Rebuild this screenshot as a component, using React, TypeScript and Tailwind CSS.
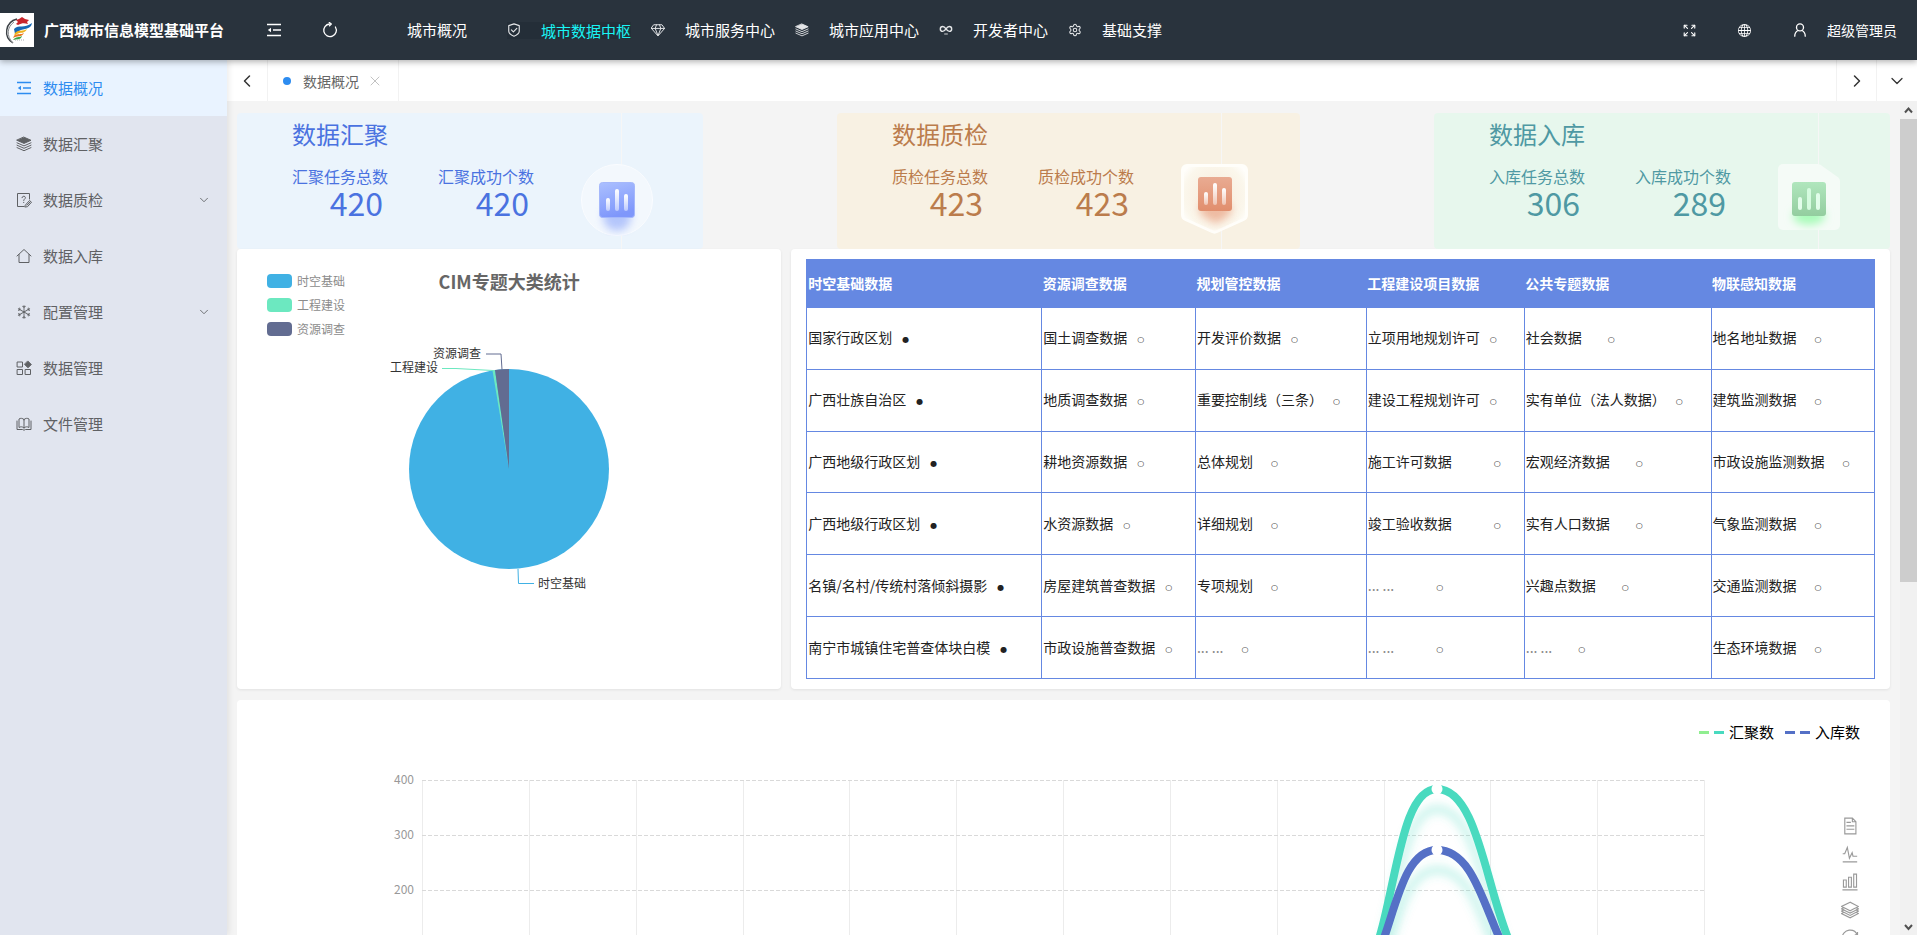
import React, { useState } from 'react';
import clsx from 'clsx';
import { BsGlobe, BsSnow } from 'react-icons/bs';
import { ChevronDown, ChevronLeft, ChevronRight, Settings, X } from 'lucide-react';

type IconProps = { className?: string };

const stroke = {
  viewBox: '0 0 16 16',
  fill: 'none',
  stroke: 'currentColor',
  strokeLinejoin: 'round' as const,
  strokeLinecap: 'round' as const,
};

const FoldIcon = ({ className }: IconProps) => (
  <svg viewBox="0 0 16 16" fill="none" stroke="currentColor" strokeWidth="1.5" className={className}>
    <path d="M1 2.5h14M7 8h8M1 13.5h14" />
    <path d="M5 5.8v4.4L1.8 8z" fill="currentColor" stroke="none" />
  </svg>
);

const ReloadIcon = ({ className }: IconProps) => (
  <svg {...stroke} strokeWidth="1.3" className={className}>
    <path d="M13.4 5A6.3 6.3 0 1 1 7.6 2" />
    <path d="M7.3.5l2 1.6-1.8 1.7" />
  </svg>
);

const ShieldIcon = ({ className }: IconProps) => (
  <svg {...stroke} strokeWidth="1.3" className={className}>
    <path d="M8 1l6 2v6.5c0 2.6-2.6 4.3-6 5.7-3.4-1.4-6-3.1-6-5.7V3z" />
    <path d="M5 7.8l2.3 2.3 3.9-4" />
  </svg>
);

const DiamondIcon = ({ className }: IconProps) => (
  <svg {...stroke} strokeWidth="1.1" className={className}>
    <path d="M3.5 2h9l3 4.2L8 14.8.5 6.2z" />
    <path d="M.5 6.2h15M4.8 6.2L8 14.5l3.2-8.3M4.8 6.2L6.3 2M11.2 6.2L9.7 2" />
  </svg>
);

const LayersIcon = ({ className }: IconProps) => (
  <svg {...stroke} strokeWidth="1" className={className}>
    <path d="M8 1.2l7 3.1-7 3.1-7-3.1z" fill="currentColor" />
    <path d="M1 6.8l7 3.1 7-3.1M1 9.2l7 3.1 7-3.1M1 11.6l7 3.1 7-3.1" />
  </svg>
);

const InfinityIcon = ({ className }: IconProps) => (
  <svg {...stroke} strokeWidth="1.6" className={className}>
    <path d="M8 6.8C6.8 5 5.800 4 4.300 4a2.800 2.800 0 0 0 0 5.600C5.800 9.600 6.800 8.600 8 6.800S10.200 4 11.700 4a2.800 2.800 0 0 1 0 5.600C10.200 9.600 9.200 8.600 8 6.800z" />
    <path d="M6.5 12.5h3" opacity="0.6" />
  </svg>
);

const ExpandIcon = ({ className }: IconProps) => (
  <svg {...stroke} strokeWidth="1.4" className={className}>
    <path d="M1.5 5V1.5H5M11 1.5h3.5V5M14.5 11v3.5H11M5 14.5H1.5V11" />
    <path d="M1.8 1.8l3.7 3.7M14.2 1.8l-3.7 3.7M14.2 14.2l-3.7-3.7M1.8 14.2l3.7-3.7" />
  </svg>
);

const UserIcon = ({ className }: IconProps) => (
  <svg {...stroke} strokeWidth="1.5" className={className}>
    <circle cx="8" cy="5" r="4" />
    <path d="M5.8 8.6C3.5 9.7 2 11.9 2 15M10.2 8.6c2.3 1.1 3.8 3.3 3.8 6.4" />
  </svg>
);

const SurveyIcon = ({ className }: IconProps) => (
  <svg {...stroke} strokeWidth="1" className={className}>
    <path d="M13.5 7V1.5h-12v13H8" />
    <path d="M6 5.7c0-2 3.4-2 3.4 0 0 1.3-1.7 1.3-1.7 2.8M7.7 10.3v.3" />
    <path d="M9.5 13l4-4.5 2 1.7-4 4.5-2.3.3zM11 13.2l3-3.2" />
  </svg>
);

const HouseIcon = ({ className }: IconProps) => (
  <svg {...stroke} strokeWidth="1" className={className}>
    <path d="M1 8l7-6.5L15 8M3 6.5v8h10v-8" />
  </svg>
);

const AppsIcon = ({ className }: IconProps) => (
  <svg {...stroke} strokeWidth="1" className={className}>
    <path d="M1.5 2h5v5h-5zM1.5 9.5h5v5h-5zM9.5 9.5h5v5h-5z" />
    <path d="M12 1.2l3.3 3.3L12 7.8 8.7 4.5z" fill="currentColor" />
  </svg>
);

const BookIcon = ({ className }: IconProps) => (
  <svg {...stroke} strokeWidth="1" className={className}>
    <path d="M8 3.5C6.500 2 4.500 2 3 3v8.500c1.500-1 3.500-1 5 .5 1.500-1.500 3.500-1.500 5-.5V3c-1.500-1-3.500-1-5 .5zM8 3.500V12" />
    <path d="M1 5v8.5h5.5L8 14.200l1.500-.7H15V5" />
  </svg>
);

const Logo = () => (
  <svg viewBox="0 0 34 34" className="size-[34px] shrink-0 bg-white" role="img" aria-label="logo">
    <path d="M17 6C5 9 3 24 13 30" fill="none" stroke="#3d4247" strokeWidth="1.4" />
    <path d="M14 9C7 14 6 23 13 30" fill="none" stroke="#85898d" strokeWidth="1" />
    <path d="M16 7l3-1 3-2 3 2 4 1-2 2 1 2c-4-1-6-1-10 1l-2-1 2-2z" fill="#c8252c" />
    <path d="M14 16c5-5 10 0 18-6-1 7-8 5-13 8-2 1-4 3-4 3z" fill="#1769b5" />
    <path d="M15 20c4-4 8-1 12-4-2 5-7 3-10 5l-3 2z" fill="#f0b21d" />
    <path d="M14 23c4-3 7-1 10-3-2 4-6 3-9 4l-2 1z" fill="#e8741e" />
    <path d="M13 27c3-4 6-2 9-4-1 4-5 3-9 4z" fill="#3ea447" />
    <path d="M15 27h10" stroke="#a9adb1" strokeWidth="1" strokeDasharray="1 1" />
  </svg>
);

const navLinks = [
  { label: '城市概况', icon: null },
  { label: '城市数据中枢', icon: <ShieldIcon className="size-4" /> },
  { label: '城市服务中心', icon: <DiamondIcon className="size-3.5" /> },
  { label: '城市应用中心', icon: <LayersIcon className="size-4" /> },
  { label: '开发者中心', icon: <InfinityIcon className="size-3.5" /> },
  { label: '基础支撑', icon: <Settings className="size-4" strokeWidth={1.8} /> },
];

const sideLinks = [
  { label: '数据概况', icon: <FoldIcon className="size-4" />, more: false },
  { label: '数据汇聚', icon: <LayersIcon className="size-4" />, more: false },
  { label: '数据质检', icon: <SurveyIcon className="size-4" />, more: true },
  { label: '数据入库', icon: <HouseIcon className="size-4" />, more: false },
  { label: '配置管理', icon: <BsSnow className="size-3.5" />, more: true },
  { label: '数据管理', icon: <AppsIcon className="size-4" />, more: false },
  { label: '文件管理', icon: <BookIcon className="size-4" />, more: false },
];

const Header = () => (
  <header className="relative z-20 flex h-[60px] shrink-0 items-center bg-[#29333d] text-[15px] text-white shadow-[0_2px_6px_rgba(0,0,0,0.3)]">
    <div className="flex w-[266px] shrink-0 items-center gap-2.5">
      <Logo />
      <h1 className="font-bold">广西城市信息模型基础平台</h1>
    </div>
    <button aria-label="收起菜单" className="flex w-4 justify-center">
      <FoldIcon className="size-4" />
    </button>
    <button aria-label="刷新" className="ml-10 flex w-4 justify-center">
      <ReloadIcon className="size-4" />
    </button>
    <nav className="ml-[69px] flex items-center gap-5">
      {navLinks.map((link, i) => (
        <a
          key={link.label}
          href="#"
          className={clsx(
            'flex items-center whitespace-nowrap',
            i === 0 && 'mr-5',
            i === 1 && 'bg-[#242e38] leading-[17px] text-[#19f5f5]'
          )}
        >
          {link.icon && (
            <span className="mr-5 flex w-3.5 justify-center text-[#e4e6e8]">{link.icon}</span>
          )}
          {link.label}
        </a>
      ))}
    </nav>
    <div className="ml-auto flex items-center pr-5 text-sm">
      <button aria-label="全屏" className="flex w-[55px] justify-center">
        <ExpandIcon className="size-[13px]" />
      </button>
      <button aria-label="语言" className="flex w-[55px] justify-center">
        <BsGlobe className="size-[13px]" />
      </button>
      <button className="flex items-center">
        <span className="flex w-[55px] justify-center">
          <UserIcon className="size-3.5" />
        </span>
        超级管理员
      </button>
    </div>
  </header>
);

const Sidebar = () => {
  const [active, setActive] = useState('数据概况');

  return (
    <aside className="z-10 w-[227px] shrink-0 bg-[#e1e5ef] shadow-[2px_0_6px_rgba(0,0,0,0.08)]">
      <nav>
        {sideLinks.map((link) => (
          <a
            key={link.label}
            href="#"
            onClick={() => setActive(link.label)}
            className={clsx(
              'flex h-14 items-center pr-4 pl-4 text-[15px]',
              active === link.label ? 'bg-[#e9f3ff] text-[#2d8cf0]' : 'text-[#5f6164]'
            )}
          >
            <span className="mr-[11px] flex w-4 justify-center">{link.icon}</span>
            {link.label}
            {link.more && <ChevronDown className="ml-auto size-3.5" strokeWidth={1.5} />}
          </a>
        ))}
      </nav>
    </aside>
  );
};

const TabBar = () => (
  <div className="flex h-[41px] shrink-0 bg-white text-[#333]">
    <button aria-label="向左" className="flex w-[41px] items-center justify-center border-r border-[#f2f2f2]">
      <ChevronLeft className="size-5" strokeWidth={1.8} />
    </button>
    <div className="flex items-center border-r border-[#f2f2f2] px-[15px] text-sm text-[#666]">
      <span className="mr-3 size-2 rounded-full bg-[#2d8cf0]" />
      数据概况
      <button aria-label="关闭" className="ml-2 text-[#c2c2c2]">
        <X className="size-4" strokeWidth={1.5} />
      </button>
    </div>
    <button aria-label="向右" className="ml-auto flex w-10 items-center justify-center border-l border-[#f2f2f2]">
      <ChevronRight className="size-5" strokeWidth={1.8} />
    </button>
    <button aria-label="更多" className="flex w-[41px] items-center justify-center border-l border-[#f2f2f2]">
      <ChevronDown className="size-5" strokeWidth={1.5} />
    </button>
  </div>
);

const BlueBadge = () => (
  <svg viewBox="0 0 72 72" className="size-[72px]">
    <defs>
      <linearGradient id="blueSq" x1="0" y1="0" x2="0.3" y2="1">
        <stop offset="0" stopColor="#abc0ff" />
        <stop offset="1" stopColor="#7f97fb" />
      </linearGradient>
      <linearGradient id="bar" x1="0" y1="0" x2="0" y2="1">
        <stop offset="0" stopColor="#fff" />
        <stop offset="1" stopColor="#fff" stopOpacity="0.45" />
      </linearGradient>
      <filter id="soft" x="-50%" y="-50%" width="200%" height="200%">
        <feGaussianBlur stdDeviation="4" />
      </filter>
    </defs>
    <circle cx="36" cy="36" r="35.5" fill="#f3f8fd" stroke="#fafcff" />
    <circle cx="36" cy="53" r="14" fill="#93abfa" opacity="0.65" filter="url(#soft)" />
    <rect x="18.5" y="18.5" width="35" height="35" rx="3" fill="url(#blueSq)" stroke="#a5b8fb" />
    <rect x="25" y="34" width="4" height="13" rx="2" fill="url(#bar)" />
    <rect x="34" y="25" width="4" height="22" rx="2" fill="url(#bar)" />
    <rect x="43" y="30" width="4" height="17" rx="2" fill="url(#bar)" />
  </svg>
);

const OrangeBadge = () => (
  <svg viewBox="0 0 68 70" className="h-[70px] w-[68px]">
    <defs>
      <linearGradient id="orangeSq" x1="0" y1="0" x2="0" y2="1">
        <stop offset="0" stopColor="#e9ab92" />
        <stop offset="1" stopColor="#e18e6d" />
      </linearGradient>
      <radialGradient id="orangeBg" cx="0.5" cy="0.45" r="0.6">
        <stop offset="0" stopColor="#f7ead9" />
        <stop offset="0.8" stopColor="#fbf7ec" />
        <stop offset="1" stopColor="#fffefb" />
      </radialGradient>
    </defs>
    <path
      d="M6 1.5h55a4.500 4.500 0 0 1 4.500 4.500v45c0 2-1 3.500-3 4.500L36 67.500c-2 1-3 1-5 0L4.500 55.500c-2-1-3-2.500-3-4.500V6A4.500 4.500 0 0 1 6 1.500z"
      fill="url(#orangeBg)"
      stroke="#fffefa"
      strokeWidth="3"
    />
    <path d="M19 40h31v10L35 60 19 50z" fill="#e9a384" opacity="0.7" filter="url(#soft)" />
    <rect x="17" y="13" width="34" height="34" rx="3" fill="url(#orangeSq)" />
    <rect x="23" y="28" width="4" height="13" rx="2" fill="url(#bar)" />
    <rect x="32" y="19" width="4" height="22" rx="2" fill="url(#bar)" />
    <rect x="41" y="24" width="4" height="17" rx="2" fill="url(#bar)" />
  </svg>
);

const GreenBadge = () => (
  <svg viewBox="0 0 62 66" className="h-[66px] w-[62px]">
    <defs>
      <linearGradient id="greenSq" x1="0" y1="0" x2="0" y2="1">
        <stop offset="0" stopColor="#b0e6bd" />
        <stop offset="1" stopColor="#93cd9f" />
      </linearGradient>
    </defs>
    <path
      d="M5 0h34c2 0 3 .5 4.500 1.500L59 12.500c2 1.500 3 2.500 3 5V61a5 5 0 0 1-5 5H5a5 5 0 0 1-5-5V5a5 5 0 0 1 5-5z"
      fill="#f5fbf7"
    />
    <ellipse cx="31" cy="52" rx="16" ry="9" fill="#a9fbb9" filter="url(#soft)" />
    <rect x="14" y="18" width="34" height="34" rx="3" fill="url(#greenSq)" />
    <rect x="20" y="33" width="4" height="13" rx="2" fill="#e2fdea" />
    <rect x="29" y="24" width="4" height="22" rx="2" fill="#d5fbdf" />
    <rect x="38" y="29" width="4" height="17" rx="2" fill="#e2fdea" />
  </svg>
);

const summaryCards = [
  {
    title: '数据汇聚',
    tone: 'bg-[#ebf4fc] text-[#4a72e0]',
    items: [['汇聚任务总数', 420], ['汇聚成功个数', 420]],
    badge: <BlueBadge />,
  },
  {
    title: '数据质检',
    tone: 'bg-[#f8f1e3] text-[#bb7c4c]',
    items: [['质检任务总数', 423], ['质检成功个数', 423]],
    badge: <OrangeBadge />,
  },
  {
    title: '数据入库',
    tone: 'bg-[#e7f7ed] text-[#4f99a3]',
    items: [['入库任务总数', 306], ['入库成功个数', 289]],
    badge: <GreenBadge />,
  },
];

const SummaryCards = () => (
  <div className="grid grid-cols-[466fr_463fr_456fr] gap-[134px]">
    {summaryCards.map((card) => (
      <section key={card.title} className={clsx('relative flex h-[136px] rounded pl-[55px]', card.tone)}>
        <div className="absolute inset-y-0 left-[384px] w-px bg-[#f6f6f6]" />
        <div>
          <h2 className="pt-[3px] text-2xl leading-9">{card.title}</h2>
          <dl className="mt-3 flex gap-[50px]">
            {card.items.map(([label, value]) => (
              <div key={label} className="w-24">
                <dt className="text-base leading-6 whitespace-nowrap">{label}</dt>
                <dd className="pr-[5px] text-right text-[32px] leading-7">{value}</dd>
              </div>
            ))}
          </dl>
        </div>
        <div className="relative mt-[51px] ml-[47px]">{card.badge}</div>
      </section>
    ))}
  </div>
);

const pieLegend = [
  { label: '时空基础', color: 'bg-[#40b1e4]' },
  { label: '工程建设', color: 'bg-[#6ce8c0]' },
  { label: '资源调查', color: 'bg-[#626c91]' },
];

const PiePanel = () => (
  <section className="relative rounded bg-white shadow-[0_1px_3px_rgba(0,0,0,0.08)]">
    <ul className="absolute top-5 left-[30px] text-xs leading-6 text-[#8c8c8c]">
      {pieLegend.map((item) => (
        <li key={item.label} className="flex items-center gap-[5px]">
          <span className={clsx('h-3.5 w-[25px] rounded', item.color)} />
          {item.label}
        </li>
      ))}
    </ul>
    <h3 className="absolute inset-x-0 top-[18px] text-center text-lg leading-7 font-bold text-[#666]">CIM专题大类统计</h3>
    <svg viewBox="0 0 544 440" className="mx-auto h-[440px] max-w-full" fontSize="12" fill="#333">
      <circle cx="272" cy="220" r="100" fill="#40b1e4" />
      <path d="M272 220L255.5 121.400A100 100 0 0 1 258 121z" fill="#6ce8c0" />
      <path d="M272 220L258 121A100 100 0 0 1 272 120z" fill="#626c91" />
      <path d="M265 120.5L264 105H249" fill="none" stroke="#626c91" />
      <path d="M256 121.5L219 119.500H205" fill="none" stroke="#6ce8c0" />
      <path d="M281 320L281.5 334.500H297" fill="none" stroke="#40b1e4" />
      <text x="244" y="109" textAnchor="end">资源调查</text>
      <text x="201" y="123" textAnchor="end">工程建设</text>
      <text x="301" y="339">时空基础</text>
    </svg>
  </section>
);

const columns = [
  { label: '时空基础数据', width: 'w-[22%]' },
  { label: '资源调查数据', width: 'w-[14.4%]' },
  { label: '规划管控数据', width: 'w-[16%]' },
  { label: '工程建设项目数据', width: 'w-[14.8%]' },
  { label: '公共专题数据', width: 'w-[17.5%]' },
  { label: '物联感知数据', width: 'w-[15.3%]' },
];

// gap between a name and its status mark
const gaps = {
  s: 'ml-2.5',
  m: 'ml-[18px]',
  l: 'ml-[26px]',
  xl: 'ml-[42px]',
};

type Cell = [string, keyof typeof gaps];

const rows: Cell[][] = [
  [['国家行政区划', 's'], ['国土调查数据', 's'], ['开发评价数据', 's'], ['立项用地规划许可', 's'], ['社会数据', 'l'], ['地名地址数据', 'm']],
  [['广西壮族自治区', 's'], ['地质调查数据', 's'], ['重要控制线（三条）', 's'], ['建设工程规划许可', 's'], ['实有单位（法人数据）', 's'], ['建筑监测数据', 'm']],
  [['广西地级行政区划', 's'], ['耕地资源数据', 's'], ['总体规划', 'm'], ['施工许可数据', 'xl'], ['宏观经济数据', 'l'], ['市政设施监测数据', 'm']],
  [['广西地级行政区划', 's'], ['水资源数据', 's'], ['详细规划', 'm'], ['竣工验收数据', 'xl'], ['实有人口数据', 'l'], ['气象监测数据', 'm']],
  [['名镇/名村/传统村落倾斜摄影', 's'], ['房屋建筑普查数据', 's'], ['专项规划', 'm'], ['... ...', 'xl'], ['兴趣点数据', 'l'], ['交通监测数据', 'm']],
  [['南宁市城镇住宅普查体块白模', 's'], ['市政设施普查数据', 's'], ['... ...', 'm'], ['... ...', 'xl'], ['... ...', 'l'], ['生态环境数据', 'm']],
];

const TablePanel = () => (
  <section className="col-span-2 rounded bg-white px-[15px] py-2.5 shadow-[0_1px_3px_rgba(0,0,0,0.08)]">
    <table className="h-[420px] w-full table-fixed border-collapse border border-[#6588e2] text-left text-sm text-[#222]">
      <thead>
        <tr className="h-12 bg-[#6588e2] text-white">
          {columns.map((col) => (
            <th key={col.label} className={clsx('px-px pb-0.5 font-bold', col.width)}>{col.label}</th>
          ))}
        </tr>
      </thead>
      <tbody>
        {rows.map((row, r) => (
          <tr key={r}>
            {row.map(([name, gap], c) => (
              <td key={c} className="border border-[#6588e2] px-px pb-0.5 whitespace-nowrap">
                <span className={clsx(name === '... ...' && 'text-[#8a8a8a]')}>{name}</span>
                <span className={clsx("align-[1px] font-['DejaVu_Sans'] text-[8px]", gaps[gap])}>{c === 0 ? '●' : '○'}</span>
              </td>
            ))}
          </tr>
        ))}
      </tbody>
    </table>
  </section>
);

const toolbox = [
  { label: '数据视图', d: 'M17.5,17.3H33 M45.4,29.5h-28 M11.5,2v56H51V14.8L38.4,2H11.5z M38.4,2.2v12.7H51 M45.4,41.7h-28' },
  { label: '折线图', d: 'M4.1,28.9h7.1l9.3-22l7.4,38l9.7-19.7l3,12.8h14.9M4.1,58h51.4' },
  { label: '柱状图', d: 'M6.7,22.9h10V48h-10V22.9zM24.9,13h10v35h-10V13zM43.2,2h10v46h-10V2zM3.1,58h53.7' },
  {
    label: '堆叠',
    d: 'M8.2,38.4l-8.4,4.1l30.6,15.3L60,42.5l-8.1-4.1l-21.5,11L8.2,38.4z M51.9,30l-8.1,4.2l-13.4,6.9l-13.9-6.9L8.2,30l-8.4,4.2l8.4,4.2l22.2,11l21.5-11l8.1-4.2L51.9,30z M51.9,21.7l-8.1,4.2L35.7,30l-5.3,2.8L24.9,30l-8.4-4.1l-8.3-4.2l-8.4,4.2L8.2,30l8.3,4.2l13.9,6.9l13.4-6.9l8.1-4.2l8.1-4.1L51.9,21.7zM30.4,2.2L-0.2,17.5l8.4,4.1l8.3,4.2l8.4,4.2l5.5,2.7l5.3-2.7l8.1-4.2l8.1-4.2l8.1-4.1L30.4,2.2z',
  },
  { label: '还原', d: 'M47,18.9h9.8V8.7 M56.3,20.1C52.1,9,40.5,0.6,26.8,2.1C12.6,3.7,1.6,16.2,2.1,30.6 M13,41.1H3.1v10.2 M3.7,39.9c4.2,11.1,15.8,19.5,29.5,18c14.2-1.6,25.2-14.1,24.7-28.5' },
];

const MONTHS = 12;
const GRID = { left: 185, right: 1467, top: 16, step: 55 };

const TrendPanel = () => {
  const colWidth = (GRID.right - GRID.left) / MONTHS;
  const bottom = GRID.top + GRID.step * 4;

  return (
    <section className="mt-[11px] rounded bg-white">
      <div className="flex h-16 items-center justify-end gap-[11px] pr-[30px] text-[15px] text-black">
        <span className="flex items-center gap-[5px]">
          <span className="h-[3px] w-2.5 bg-[#90ee90]" />
          <span className="h-[3px] w-2.5 bg-[#48dabf]" />
          汇聚数
        </span>
        <span className="flex items-center gap-[5px]">
          <span className="h-[3px] w-2.5 bg-[#5470c6]" />
          <span className="h-[3px] w-2.5 bg-[#5470c6]" />
          入库数
        </span>
      </div>
      <div className="flex">
        <svg viewBox="0 0 1573 290" className="min-w-0 flex-1" fontSize="12" fill="none">
          <defs>
            <filter id="lineShadow" filterUnits="userSpaceOnUse" x="0" y="0" width="1573" height="290">
              <feDropShadow dx="0" dy="20" stdDeviation="5" floodColor="#48d8bf" floodOpacity="0.3" />
            </filter>
          </defs>
          {Array.from({ length: MONTHS + 1 }).map((_, i) => {
            const x = Math.round(GRID.left + i * colWidth) + 0.5;
            return <path key={i} d={`M${x} ${GRID.top}V${bottom}`} stroke="#ececec" />;
          })}
          {[400, 300, 200, 100, 0].map((value, i) => {
            const y = GRID.top + i * GRID.step;
            return (
              <g key={value}>
                <path d={`M${GRID.left} ${y + 0.5}H${GRID.right}`} stroke="#d9d9d9" strokeDasharray="4 2" />
                <text x={GRID.left - 8} y={y + 4} textAnchor="end" fill="#999">{value}</text>
              </g>
            );
          })}
          <g strokeWidth="8">
            <path
              d="M238 236H1093C1163 236 1147 25 1200 25C1255 25 1250 206 1309 219C1350 232 1380 236 1414 236"
              stroke="#48dabf"
              filter="url(#lineShadow)"
            />
            <circle cx="1200" cy="25" r="5.5" fill="#fff" />
            <path
              d="M238 236H1093C1159 236 1147 86 1200 86C1254 86 1250 211 1309 226C1350 234 1380 236 1414 236"
              stroke="#5470c6"
              filter="url(#lineShadow)"
            />
            <circle cx="1200" cy="86" r="5.5" fill="#fff" />
          </g>
        </svg>
        <div className="flex w-20 flex-col items-center gap-2.5 pt-[53px]">
          {toolbox.map((tool) => (
            <button key={tool.label} aria-label={tool.label}>
              <svg viewBox="-2 -2 64 64" className="size-[18px]" fill="none" stroke="#999" strokeWidth="4">
                <path d={tool.d} />
              </svg>
            </button>
          ))}
        </div>
      </div>
    </section>
  );
};

const ScrollTrack = () => (
  <div className="flex w-[17px] shrink-0 flex-col items-center bg-[#f1f1f1] text-[#505050]">
    <svg viewBox="0 0 17 17" className="h-[18px] w-[17px]" fill="none" stroke="currentColor" strokeWidth="2">
      <path d="M5 11l3.5-4 3.5 4" />
    </svg>
    <div className="h-5/9 w-full bg-[#cdcdcd]" />
    <svg viewBox="0 0 17 17" className="mt-auto size-[17px]" fill="none" stroke="currentColor" strokeWidth="2">
      <path d="M5 7l3.5 4L12 7" />
    </svg>
  </div>
);

export default function App() {
  return (
    <div className="flex h-screen flex-col overflow-hidden bg-[#f4f4f4] font-['Noto_Sans_CJK_SC',sans-serif]">
      <Header />
      <div className="flex min-h-0 flex-1">
        <Sidebar />
        <div className="flex min-w-0 flex-1 flex-col">
          <TabBar />
          <div className="flex min-h-0 flex-1">
            <main className="min-w-0 flex-1 overflow-y-auto px-2.5 pt-3 pb-2.5 [scrollbar-width:none]">
              <SummaryCards />
              <div className="grid grid-cols-3 gap-2.5">
                <PiePanel />
                <TablePanel />
              </div>
              <TrendPanel />
            </main>
            <ScrollTrack />
          </div>
        </div>
      </div>
    </div>
  );
}
